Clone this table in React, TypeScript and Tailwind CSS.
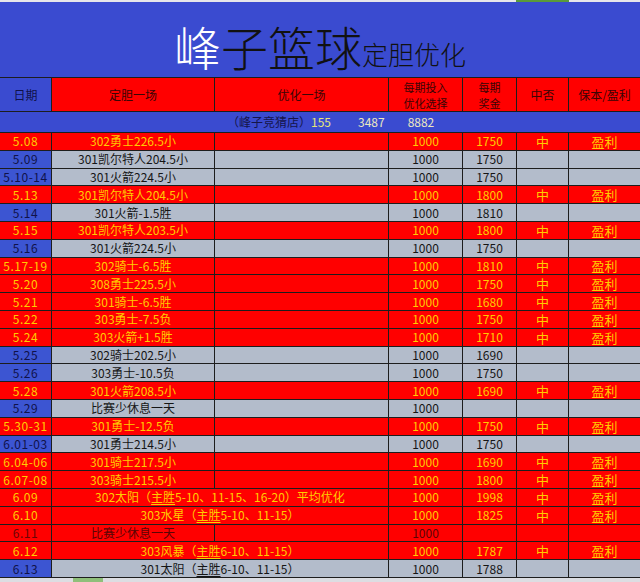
import React from 'react';

type Row = {
  date: string;
  pick: string;
  bet: string;
  prize: string;
  hit?: boolean;
  kind: 'red' | 'grey' | 'dark';
  merged?: boolean;
};

const rows: Row[] = [
  { date: '5.08', pick: '302勇士226.5小', bet: '1000', prize: '1750', hit: true, kind: 'red' },
  { date: '5.09', pick: '301凯尔特人204.5小', bet: '1000', prize: '1750', kind: 'grey' },
  { date: '5.10-14', pick: '301火箭224.5小', bet: '1000', prize: '1750', kind: 'grey' },
  { date: '5.13', pick: '301凯尔特人204.5小', bet: '1000', prize: '1800', hit: true, kind: 'red' },
  { date: '5.14', pick: '301火箭-1.5胜', bet: '1000', prize: '1810', kind: 'grey' },
  { date: '5.15', pick: '301凯尔特人203.5小', bet: '1000', prize: '1800', hit: true, kind: 'red' },
  { date: '5.16', pick: '301火箭224.5小', bet: '1000', prize: '1750', kind: 'grey' },
  { date: '5.17-19', pick: '302骑士-6.5胜', bet: '1000', prize: '1810', hit: true, kind: 'red' },
  { date: '5.20', pick: '308勇士225.5小', bet: '1000', prize: '1750', hit: true, kind: 'red' },
  { date: '5.21', pick: '301骑士-6.5胜', bet: '1000', prize: '1680', hit: true, kind: 'red' },
  { date: '5.22', pick: '303勇士-7.5负', bet: '1000', prize: '1750', hit: true, kind: 'red' },
  { date: '5.24', pick: '303火箭+1.5胜', bet: '1000', prize: '1710', hit: true, kind: 'red' },
  { date: '5.25', pick: '302骑士202.5小', bet: '1000', prize: '1690', kind: 'grey' },
  { date: '5.26', pick: '303勇士-10.5负', bet: '1000', prize: '1750', kind: 'grey' },
  { date: '5.28', pick: '301火箭208.5小', bet: '1000', prize: '1690', hit: true, kind: 'red' },
  { date: '5.29', pick: '比赛少休息一天', bet: '1000', prize: '', kind: 'grey' },
  { date: '5.30-31', pick: '301勇士-12.5负', bet: '1000', prize: '1750', hit: true, kind: 'red' },
  { date: '6.01-03', pick: '301勇士214.5小', bet: '1000', prize: '1750', kind: 'grey' },
  { date: '6.04-06', pick: '301骑士217.5小', bet: '1000', prize: '1690', hit: true, kind: 'red' },
  { date: '6.07-08', pick: '303骑士215.5小', bet: '1000', prize: '1800', hit: true, kind: 'red' },
  { date: '6.09', pick: '302太阳（|主胜|5-10、11-15、16-20）平均优化', bet: '1000', prize: '1998', hit: true, kind: 'red', merged: true },
  { date: '6.10', pick: '303水星（|主胜|5-10、11-15）', bet: '1000', prize: '1825', hit: true, kind: 'red', merged: true },
  { date: '6.11', pick: '比赛少休息一天', bet: '1000', prize: '', kind: 'dark' },
  { date: '6.12', pick: '303风暴（|主胜|6-10、11-15）', bet: '1000', prize: '1787', hit: true, kind: 'red', merged: true },
  { date: '6.13', pick: '301太阳（|主胜|6-10、11-15）', bet: '1000', prize: '1788', kind: 'grey', merged: true },
];

const font = { fontFamily: '"Noto Sans CJK SC", "Noto Sans", sans-serif' };

// "|" marks the underlined part (主胜)
function PickText({ text }: { text: string }) {
  const parts = text.split('|');
  return (
    <span>
      {parts.map((p, i) =>
        i === 1 ? (
          <span key={i} className="underline underline-offset-2">
            {p}
          </span>
        ) : (
          <span key={i}>{p}</span>
        )
      )}
    </span>
  );
}

function TableRow({ r }: { r: Row }) {
  const bg = r.kind === 'grey' ? 'bg-[#b3bccb]' : 'bg-[#ff0000]';
  const text =
    r.kind === 'grey' ? 'text-[#151515]' : r.kind === 'dark' ? 'text-[#5a0505]' : 'text-[#ffcc00]';
  const dateCls =
    r.kind === 'grey' ? 'bg-[#3c55d2] text-[#10124a]' : r.kind === 'dark' ? 'bg-[#ff0000] text-[#6a0505]' : 'bg-[#ff0000] text-[#ffcc00]';
  const cell = 'flex items-center justify-center border-r border-[#1d1d1d] whitespace-nowrap';
  return (
    <div className={`grid grid-cols-[52px_163px_174px_74px_54px_52px_71px] h-[17.8px] border-b border-[#1d1d1d] text-[12px] leading-none ${bg} ${text}`}>
      <div className={`${cell} tracking-[0.5px] ${dateCls}`}>{r.date}</div>
      {r.merged ? (
        <div className={`${cell} col-span-2`}>
          <PickText text={r.pick} />
        </div>
      ) : (
        <>
          <div className={cell}>{r.pick}</div>
          <div className={cell}></div>
        </>
      )}
      <div className={cell}>{r.bet}</div>
      <div className={cell}>{r.prize}</div>
      <div className={`${cell} text-[13px]`}>{r.hit ? '中' : ''}</div>
      <div className="flex items-center justify-center text-[13px]">{r.hit ? '盈利' : ''}</div>
    </div>
  );
}

export default function App() {
  return (
    <div className="w-[640px] h-[582px] overflow-hidden bg-[#3a4bd0] flex flex-col" style={font}>
      <div className="h-[2px] bg-[#e6e6ea] flex">
        <div className="w-[516px]" />
        <div className="w-[53px] bg-[#5a9a3a]" />
      </div>

      <div className="h-[75px] flex items-end justify-center pb-[8px] text-[#111]">
        <span className="text-[47px] leading-none font-light">
          <span className="text-white">峰</span>子篮球
        </span>
        <span className="text-[26px] leading-none font-light mb-[2px]">定胆优化</span>
      </div>

      <div className="grid grid-cols-[52px_163px_174px_74px_54px_52px_71px] h-[35px] border-t border-b border-[#1d1d1d] text-[12px] leading-none text-[#3a0505]">
        <div className="flex items-center justify-center border-r border-[#1d1d1d] bg-[#3a4bd0] text-[#10124a]">日期</div>
        <div className="flex items-center justify-center border-r border-[#1d1d1d] bg-[#ff0000]">定胆一场</div>
        <div className="flex items-center justify-center border-r border-[#1d1d1d] bg-[#ff0000]">优化一场</div>
        <div className="flex flex-col items-center justify-center border-r border-[#1d1d1d] bg-[#ff0000] text-[11px] leading-[16px]">
          <span>每期投入</span>
          <span>优化选择</span>
        </div>
        <div className="flex flex-col items-center justify-center border-r border-[#1d1d1d] bg-[#ff0000] text-[11px] leading-[16px]">
          <span>每期</span>
          <span>奖金</span>
        </div>
        <div className="flex items-center justify-center border-r border-[#1d1d1d] bg-[#ff0000]">中否</div>
        <div className="flex items-center justify-center bg-[#ff0000]">保本/盈利</div>
      </div>

      <div className="h-[21px] flex items-center border-b border-[#1d1d1d] text-[12px] leading-none">
        <span className="ml-[227px] text-[#15154a]">（峰子竞猜店）</span>
        <span className="text-[#e6e67a]">155</span>
        <span className="ml-[27px] text-[#ece8c0]">3487</span>
        <span className="ml-[23px] text-[#ece8c0]">8882</span>
      </div>

      {rows.map((r) => (
        <TableRow key={r.date} r={r} />
      ))}

      <div className="flex-1 bg-[#dcdde2] flex">
        <div className="w-[73px]" />
        <div className="w-[30px] bg-[#8fbf7a]" />
      </div>
    </div>
  );
}
